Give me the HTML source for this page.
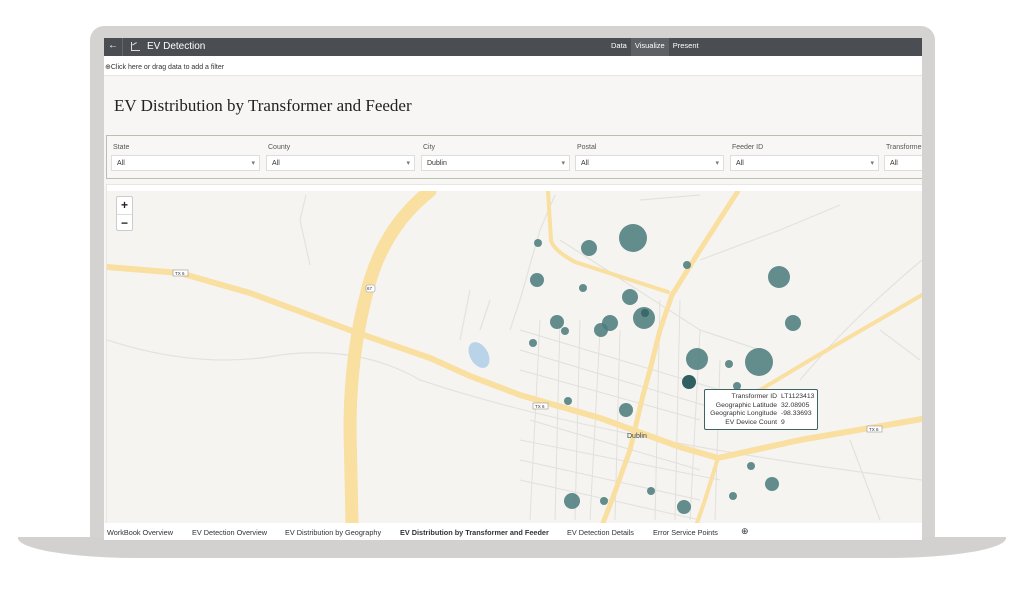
<!DOCTYPE html>
<html><head><meta charset="utf-8"><style>
*{margin:0;padding:0;box-sizing:border-box}
body{width:1024px;height:600px;background:#fff;position:relative;overflow:hidden;font-family:"Liberation Sans",sans-serif}
.frame{position:absolute;left:90px;top:26px;width:845px;height:520px;background:#d4d3d1;border-radius:14px 14px 0 0}
.base{position:absolute;left:18px;top:537px;width:988px;height:21px;background:#d2d1cf;border-radius:0 0 120px 120px/0 0 20px 20px}
.screen{position:absolute;left:104px;top:38px;width:818px;height:502px;background:#f7f6f4;overflow:hidden}
.top{height:18px;background:#4a4d52;color:#fff;font-size:9px;position:relative}
.top .back{position:absolute;left:4px;top:2px;font-size:10px}
.top .sep{position:absolute;left:18px;top:0;width:1px;height:18px;background:#63666b}
.top .title{position:absolute;left:43px;top:3px;font-size:10px}
.top .ic{position:absolute;left:27px;top:4px;width:9px;height:9px;border-left:1.5px solid #ddd;border-bottom:1.5px solid #ddd}
.top .ic:after{content:"";position:absolute;left:1px;top:1px;width:5px;height:4px;border-top:1.5px solid #ddd;transform:rotate(-30deg)}
.top .tabs{position:absolute;left:503px;top:0;font-size:7.5px;display:flex}
.top .tabs span{padding:3px 4px;height:18px}
.top .tabs .on{background:#5d6166}
.filt{height:20px;background:#fff;font-size:7px;color:#333;padding:7px 0 0 1px;border-bottom:1px solid #e6e4e0}
h1{font-family:"Liberation Serif",serif;font-weight:normal;font-size:17px;color:#222;position:absolute;left:10px;top:58px}
.fbar{position:absolute;left:2px;top:97px;width:830px;height:44px;border:1px solid #b8c0b0;background:#f8f7f5}
.f{position:absolute;top:0}
.f .l{font-size:7px;color:#555;position:absolute;top:8px;left:6px;white-space:nowrap}
.f .s{position:absolute;top:19px;left:4px;width:149px;height:16px;border:1px solid #ddd;background:#fff;font-size:7px;color:#333;padding:4px 0 0 5px}
.f .s:after{content:"▾";position:absolute;right:4px;top:3px;font-size:7px;color:#777}
.panel{position:absolute;left:2px;top:146px;width:830px;height:345px;background:#fff;border:1px solid #e8e6e2}
.map{position:absolute;left:3px;top:153px;width:815px;height:332px}
.zoom{position:absolute;left:9px;top:5px;width:17px;height:35px;background:#fff;border:1px solid #ccc;border-radius:2px;font-size:12px;font-weight:bold;text-align:center;line-height:17px;color:#222}
.tip{position:absolute;left:597px;top:198px;width:114px;height:41px;background:#fff;border:1.5px solid #3c6464;border-radius:2px;font-size:6.8px;color:#333;padding:3px 0 0 2px;line-height:8.6px}
.tip div{display:flex;white-space:nowrap}.tip b{font-weight:normal;width:70px;text-align:right;margin-right:4px}
.tabsb{position:absolute;left:0;top:485px;width:818px;height:17px;background:#fff;font-size:7.3px;color:#333;white-space:nowrap}
.tabsb span{position:absolute;top:5px}
</style></head><body>
<div class="frame"></div><div class="base"></div>
<div class="screen">
<div class="top"><span class="back">←</span><div class="sep"></div><div class="ic"></div><span class="title">EV Detection</span>
<div class="tabs"><span>Data</span><span class="on">Visualize</span><span>Present</span></div></div>
<div class="filt">⊕Click here or drag data to add a filter</div>
<h1>EV Distribution by Transformer and Feeder</h1>
<div class="fbar">
<div class="f" style="left:0"><span class="l">State</span><div class="s">All</div></div>
<div class="f" style="left:155px"><span class="l">County</span><div class="s">All</div></div>
<div class="f" style="left:310px"><span class="l">City</span><div class="s">Dublin</div></div>
<div class="f" style="left:464px"><span class="l">Postal</span><div class="s">All</div></div>
<div class="f" style="left:619px"><span class="l">Feeder ID</span><div class="s">All</div></div>
<div class="f" style="left:773px"><span class="l">Transformer</span><div class="s">All</div></div>
</div>
<div class="panel"></div>
<div class="map">
<svg width="815" height="332" viewBox="107 191 815 332" style="position:absolute;left:0;top:0">
<rect x="107" y="191" width="815" height="332" fill="#f6f4f1"/>
<g stroke="#e4e2de" stroke-width="1.2" fill="none">
<path d="M107 340 Q200 370 280 355 Q360 345 420 380 Q600 440 922 480"/>
<path d="M306 195 L300 220 L310 265"/><path d="M555 195 L540 230 L520 300 L510 330"/>
<path d="M470 290 L460 340"/><path d="M490 300 L480 330"/>
<path d="M560 240 L700 330 L760 350"/><path d="M700 260 L780 230 L840 205"/>
<path d="M800 380 Q850 320 922 260"/><path d="M640 200 L700 195"/>
<path d="M880 330 L920 360"/><path d="M850 440 L880 520"/>
</g>
<g stroke="#e2e0dc" stroke-width="1" fill="none">
<path d="M520 330 L720 390 M520 350 L720 410 M520 370 L700 420 M520 440 L720 480 M520 460 L700 500 M520 480 L700 520 M530 420 L700 470"/>
<path d="M540 320 L530 520 M560 320 L555 520 M580 320 L575 520 M600 330 L590 520 M620 330 L615 520 M660 300 L655 520 M680 300 L675 520 M700 330 L690 520 M720 360 L715 520"/>
</g>
<ellipse cx="479" cy="355" rx="9" ry="14" transform="rotate(-30 479 355)" fill="#b9d3e8"/>
<g stroke="#f9dfa0" fill="none" stroke-linecap="round" stroke-linejoin="round">
<path d="M107 267 L180 273 L250 293 L355 332 L430 358 L470 376 L520 395 L600 418 L680 447 L718 458 L800 440 L922 419" stroke-width="6"/>
<path d="M430 191 Q380 230 365 300 Q350 360 350 430 L352 523" stroke-width="13"/>
<path d="M548 191 L551 240 Q553 250 575 262 L668 292" stroke-width="4"/>
<path d="M738 191 L700 250 L672 295 L660 330 L650 370 L643 395 L630 450 L612 500 L603 523" stroke-width="5"/>
<path d="M922 295 L810 360 L760 390 L735 400" stroke-width="4"/>
<path d="M718 458 L705 500 L697 523" stroke-width="4"/>
</g>
<g font-family="Liberation Sans" font-size="4.5" fill="#333">
<rect x="173" y="270" width="15" height="6" fill="#fff" stroke="#999" stroke-width=".6"/><text x="175" y="275">TX 6</text>
<rect x="533" y="403" width="15" height="6" fill="#fff" stroke="#999" stroke-width=".6"/><text x="535" y="408">TX 6</text>
<rect x="867" y="426" width="15" height="6" fill="#fff" stroke="#999" stroke-width=".6"/><text x="869" y="431">TX 6</text>
<rect x="366" y="285" width="9" height="7" fill="#fff" stroke="#999" stroke-width=".6" rx="2"/><text x="367" y="290">67</text>
</g>
<text x="627" y="438" font-family="Liberation Sans" font-size="7" fill="#444">Dublin</text>
<g fill="#4f7d7d" fill-opacity=".88">
<circle cx="633" cy="238" r="14"/><circle cx="589" cy="248" r="8"/><circle cx="538" cy="243" r="4"/><circle cx="687" cy="265" r="4"/>
<circle cx="779" cy="277" r="11"/><circle cx="537" cy="280" r="7"/><circle cx="583" cy="288" r="4"/><circle cx="630" cy="297" r="8"/>
<circle cx="557" cy="322" r="7"/><circle cx="565" cy="331" r="4"/><circle cx="610" cy="323" r="8"/><circle cx="601" cy="330" r="7"/>
<circle cx="644" cy="318" r="11"/><circle cx="793" cy="323" r="8"/><circle cx="533" cy="343" r="4"/><circle cx="697" cy="359" r="11"/>
<circle cx="729" cy="364" r="4"/><circle cx="759" cy="362" r="14"/><circle cx="737" cy="386" r="4"/>
<circle cx="568" cy="401" r="4"/><circle cx="626" cy="410" r="7"/><circle cx="751" cy="466" r="4"/><circle cx="772" cy="484" r="7"/>
<circle cx="572" cy="501" r="8"/><circle cx="604" cy="501" r="4"/><circle cx="651" cy="491" r="4"/><circle cx="684" cy="507" r="7"/><circle cx="733" cy="496" r="4"/>
</g>
<circle cx="645" cy="313" r="4" fill="#3b6868"/>
<circle cx="689" cy="382" r="7" fill="#2f5f60"/>
</svg>
<div class="zoom">+<div style="border-top:1px solid #ddd">−</div></div>
<div class="tip">
<div><b>Transformer ID</b>LT1123413</div>
<div><b>Geographic Latitude</b>32.08905</div>
<div><b>Geographic Longitude</b>-98.33693</div>
<div><b>EV Device Count</b>9</div>
</div>
</div>
<div class="tabsb">
<span style="left:3px">WorkBook Overview</span>
<span style="left:88px">EV Detection Overview</span>
<span style="left:181px">EV Distribution by Geography</span>
<span style="left:296px;font-weight:bold">EV Distribution by Transformer and Feeder</span>
<span style="left:463px">EV Detection Details</span>
<span style="left:549px">Error Service Points</span>
<span style="left:637px;top:3px;font-size:9px">⊕</span>
</div>
</div>
</body></html>
